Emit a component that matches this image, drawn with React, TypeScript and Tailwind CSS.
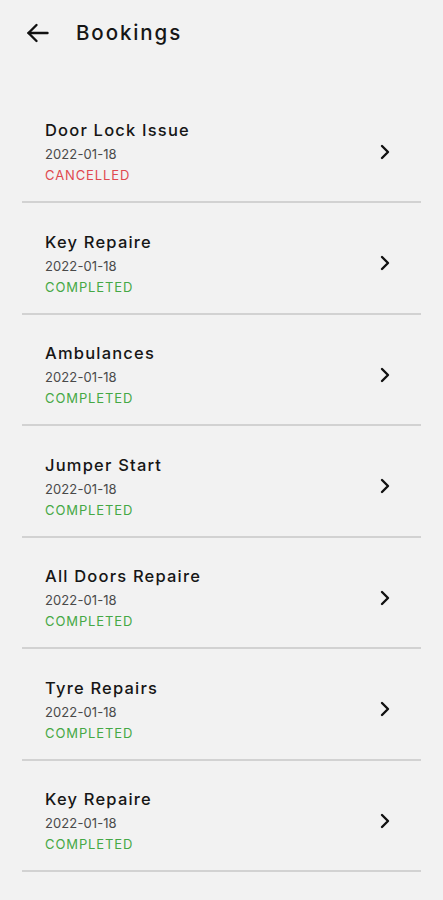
import React from "react";

const items = [
  { title: "Door Lock Issue", status: "CANCELLED" },
  { title: "Key Repaire", status: "COMPLETED" },
  { title: "Ambulances", status: "COMPLETED" },
  { title: "Jumper Start", status: "COMPLETED" },
  { title: "All Doors Repaire", status: "COMPLETED" },
  { title: "Tyre Repairs", status: "COMPLETED" },
  { title: "Key Repaire", status: "COMPLETED" },
];

export default function App() {
  return (
    <div
      className="min-h-[900px] w-[443px] bg-[#f2f2f2] text-[#1a1a1a]"
      style={{ fontFamily: "Inter, 'Noto Sans', sans-serif" }}
    >
      <div className="flex h-[91.5px] items-start">
        <div className="mt-[21px] flex h-6 items-center pl-[26px]">
          <svg width="23" height="20" viewBox="0 0 23 20" fill="none" stroke="#111" strokeWidth="2.4" strokeLinecap="round" strokeLinejoin="round">
            <path d="M21.5 10H2.5" />
            <path d="M10.5 2L2.5 10L10.5 18" />
          </svg>
          <span className="ml-[27px] text-[20.5px] font-medium leading-6 tracking-[1.9px] text-[#161616]">Bookings</span>
        </div>
      </div>
      <div className="mx-[22px]">
        {items.map((it, i) => (
          <div
            key={i}
            className="flex items-center border-b-2 border-[#d2d2d2] pb-[16px] pt-[26.5px]"
          >
            <div className="flex flex-1 flex-col pl-[23px]">
              <div className="text-[16.5px] font-medium leading-6 tracking-[1.2px] text-[#161616]">{it.title}</div>
              <div className="mt-[2px] text-[13px] leading-5 tracking-[0.1px] text-[#4a4a4a]">2022-01-18</div>
              <div
                className={`mt-[1px] text-[13px] leading-5 tracking-[0.9px] ${
                  it.status === "CANCELLED" ? "text-[#e0494f]" : "text-[#45a845]"
                }`}
              >
                {it.status}
              </div>
            </div>
            <div className="mr-[30px]">
              <svg width="12" height="16" viewBox="0 0 12 16" fill="none" stroke="#111" strokeWidth="2.4" strokeLinecap="round" strokeLinejoin="round">
                <path d="M3 2L9 8L3 14" />
              </svg>
            </div>
          </div>
        ))}
      </div>
    </div>
  );
}
